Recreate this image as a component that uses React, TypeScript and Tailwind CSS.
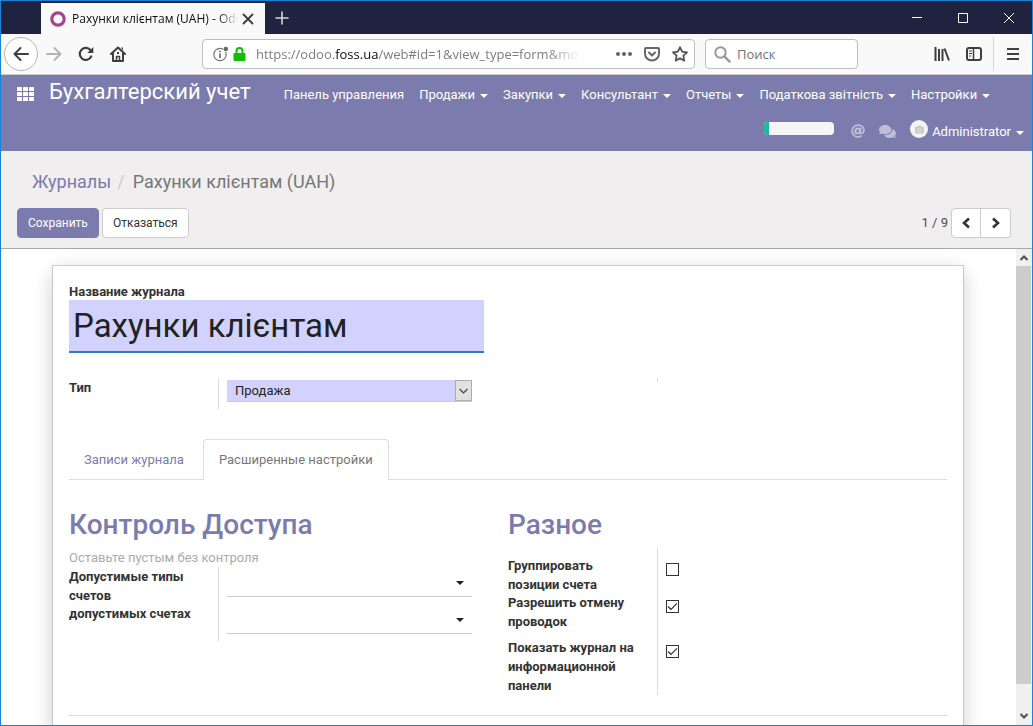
import React, { useState } from 'react';
import { FaAt, FaCamera, FaComments } from 'react-icons/fa';

const menuItems = [
  { label: 'Панель управления', dropdown: false },
  { label: 'Продажи', dropdown: true },
  { label: 'Закупки', dropdown: true },
  { label: 'Консультант', dropdown: true },
  { label: 'Отчеты', dropdown: true },
  { label: 'Податкова звітність', dropdown: true },
  { label: 'Настройки', dropdown: true },
];

function Caret() {
  return (
    <svg width="8" height="4" viewBox="0 0 8 4" fill="currentColor" aria-hidden="true">
      <path d="M0 0h8L4 4z" />
    </svg>
  );
}

function TitleBar() {
  return (
    <div className="flex h-[33px] shrink-0 items-stretch bg-[#202340]">
      <div className="ml-10 mt-0.5 flex w-56 items-center bg-[#f9f9fa] pl-2 pr-[11px]">
        <svg className="shrink-0" width="18" height="18" viewBox="0 0 18 18" aria-hidden="true">
          <circle cx="9" cy="9" r="6.2" fill="none" stroke="#a24689" strokeWidth="3.2" />
        </svg>
        <span className="ml-[5px] min-w-0 flex-1 overflow-hidden whitespace-nowrap font-['Open_Sans',sans-serif] text-xs text-[#0c0c0d] [mask-image:linear-gradient(to_right,black_88%,transparent)]">
          Рахунки клієнтам (UAH) - Odoo
        </span>
        <button type="button" aria-label="Закрыть вкладку" className="ml-1 text-[#3b3b3d]">
          <svg width="12" height="12" viewBox="0 0 12 12" stroke="currentColor" strokeWidth="1.8" strokeLinecap="round">
            <path d="M1.5 1.5l9 9M10.5 1.5l-9 9" />
          </svg>
        </button>
      </div>
      <button type="button" aria-label="Новая вкладка" className="ml-2.5 text-[#d5d5dc]">
        <svg width="14" height="14" viewBox="0 0 14 14" stroke="currentColor" strokeWidth="1.6" strokeLinecap="round">
          <path d="M7 1v12M1 7h12" />
        </svg>
      </button>
      <div className="ml-auto flex items-center gap-9 pr-[18px] text-white">
        <button type="button" aria-label="Свернуть">
          <svg width="10" height="10" viewBox="0 0 10 10" stroke="currentColor">
            <path d="M0 4.5h10" />
          </svg>
        </button>
        <button type="button" aria-label="Развернуть">
          <svg width="10" height="10" viewBox="0 0 10 10" fill="none" stroke="currentColor">
            <path d="M.5.5h9v9h-9z" />
          </svg>
        </button>
        <button type="button" aria-label="Закрыть">
          <svg width="10" height="10" viewBox="0 0 10 10" stroke="currentColor">
            <path d="M0 0l10 10M10 0L0 10" />
          </svg>
        </button>
      </div>
    </div>
  );
}

function BrowserToolbar() {
  return (
    <div className="flex h-[41px] shrink-0 items-center border-b border-[#cccccc] bg-[#f9f9fa] font-['Open_Sans',sans-serif] text-[#3f3f41]">
      <button
        type="button"
        aria-label="Назад"
        className="ml-[3px] flex size-[34px] items-center justify-center rounded-full border border-[#b5b5b7] bg-white"
      >
        <svg width="16" height="16" viewBox="0 0 16 16" fill="none" stroke="currentColor" strokeWidth="2" strokeLinecap="round" strokeLinejoin="round">
          <path d="M15 8H1.5M7.5 2l-6 6 6 6" />
        </svg>
      </button>
      <button type="button" aria-label="Вперед" className="ml-2 text-[#b4b4b5]">
        <svg width="16" height="16" viewBox="0 0 16 16" fill="none" stroke="currentColor" strokeWidth="2" strokeLinecap="round" strokeLinejoin="round">
          <path d="M1 8h13.500M8.500 2l6 6-6 6" />
        </svg>
      </button>
      <button type="button" aria-label="Обновить" className="ml-4">
        <svg width="16" height="16" viewBox="0 0 16 16" fill="none" stroke="currentColor" strokeWidth="2.200" strokeLinecap="round">
          <path d="M13.200 10.500a6 6 0 1 1-.5-6" />
          <path d="M15.300 1v6h-6z" fill="currentColor" stroke="none" />
        </svg>
      </button>
      <button type="button" aria-label="Домой" className="ml-4">
        <svg width="16" height="16" viewBox="0 0 16 16" fill="none" stroke="currentColor" strokeWidth="2" strokeLinejoin="round" strokeLinecap="round">
          <path d="M1 8l7-6.500L15 8M3 7.500V15h10V7.500" />
          <path d="M6.500 15v-4.500h3V15z" strokeWidth="1.500" />
          <path d="M7 6h2v2H7zM11 1.500h2v3" fill="currentColor" stroke="none" />
        </svg>
      </button>
      <div className="ml-[76px] flex h-[30px] min-w-0 flex-1 items-center rounded-sm border border-[#bdbdbd] bg-white pl-2.5 pr-[6px]">
        <svg className="shrink-0" width="16" height="16" viewBox="0 0 16 16" aria-hidden="true">
          <circle cx="7" cy="8.500" r="6.200" fill="none" stroke="#737373" strokeWidth="1.200" />
          <path d="M7 7.500v4.500M7 4.800v1.400" stroke="#737373" strokeWidth="1.800" />
          <circle cx="12.800" cy="3" r="3" fill="#fff" />
          <circle cx="12.800" cy="3" r="2.300" fill="#666" />
        </svg>
        <svg className="ml-1 shrink-0" width="13" height="14" viewBox="0 0 13 14" aria-hidden="true">
          <path d="M3.500 7V4a3 3 0 0 1 6 0v3" fill="none" stroke="#12bc00" strokeWidth="2" />
          <rect x="0.500" y="6" width="12" height="8" rx="1" fill="#12bc00" />
        </svg>
        <div
          role="textbox"
          tabIndex={0}
          aria-label="Адрес"
          className="ml-2.5 min-w-0 flex-1 overflow-hidden whitespace-nowrap text-[#7d7d7d] outline-none [mask-image:linear-gradient(to_right,black_90%,transparent)]"
        >
          https://odoo.<span className="text-[#0c0c0d]">foss.ua</span>/web#id=1&amp;view_type=form&amp;model
        </div>
        <button type="button" aria-label="Действия на странице" className="ml-9">
          <svg width="16" height="16" viewBox="0 0 16 16" fill="#666">
            <circle cx="2" cy="8" r="2" />
            <circle cx="8" cy="8" r="2" />
            <circle cx="14" cy="8" r="2" />
          </svg>
        </button>
        <button type="button" aria-label="Сохранить в Pocket" className="ml-3 text-[#666]">
          <svg width="16" height="16" viewBox="0 0 16 16" fill="none" stroke="currentColor" strokeWidth="2" strokeLinejoin="round" strokeLinecap="round">
            <path d="M2 2h12a1 1 0 0 1 1 1v4.500a7 7 0 0 1-14 0V3a1 1 0 0 1 1-1z" />
            <path d="M5 6.500l3 3 3-3" />
          </svg>
        </button>
        <button type="button" aria-label="В закладки" className="ml-3 text-[#555]">
          <svg width="16" height="16" viewBox="0 0 16 16" fill="none" stroke="currentColor" strokeWidth="1.800" strokeLinejoin="round">
            <path d="M8 1.200l2.100 4.500 4.900.600-3.600 3.400.900 4.900L8 12.200l-4.300 2.400.900-4.900L1 6.300l4.900-.600z" />
          </svg>
        </button>
      </div>
      <div className="ml-[10px] flex h-[30px] w-[153px] items-center rounded-sm border border-[#bdbdbd] bg-white pl-2">
        <svg className="shrink-0" width="17" height="17" viewBox="0 0 17 17" fill="none" stroke="#999" strokeLinecap="round" aria-hidden="true">
          <circle cx="6.500" cy="6.500" r="5.200" strokeWidth="2" />
          <path d="M10.800 10.800l4.800 4.800" strokeWidth="2.400" />
        </svg>
        <input
          aria-label="Поиск"
          placeholder="Поиск"
          className="ml-1.5 w-full min-w-0 bg-transparent outline-none placeholder:text-[#737373]"
        />
      </div>
      <button type="button" aria-label="Библиотека" className="ml-[76px]">
        <svg width="16" height="16" viewBox="0 0 16 16" stroke="currentColor" strokeWidth="2">
          <path d="M1.500 1v14M5 3v12M8.500 3v12M10.500 2.500l4.500 12" />
        </svg>
      </button>
      <button type="button" aria-label="Боковая панель" className="ml-4">
        <svg width="16" height="16" viewBox="0 0 16 16" fill="none" stroke="currentColor" strokeWidth="2">
          <rect x="1" y="2" width="14" height="12" rx="2" />
          <path d="M7.500 2v12" strokeWidth="1.500" />
          <path d="M3 5h3M3 7.500h3M3 10h2" strokeWidth="1" />
        </svg>
      </button>
      <div className="ml-[11px] h-[34px] w-px bg-[#d6d6d8]" />
      <button type="button" aria-label="Меню" className="ml-3 mr-3">
        <svg width="14" height="14" viewBox="0 0 14 14" stroke="currentColor" strokeWidth="2">
          <path d="M1 2h12M1 7h12M1 12h12" />
        </svg>
      </button>
    </div>
  );
}

function AppHeader() {
  return (
    <header className="h-[76px] shrink-0 bg-[#7c7bad] text-white">
      <div className="flex h-[38px] items-center pl-4">
        <button type="button" aria-label="Приложения">
          <svg width="17" height="14" viewBox="0 0 17 14" fill="currentColor">
            {[0, 5, 10].map((y) =>
              [0, 6, 12].map((x) => <rect key={`${x}-${y}`} x={x} y={y} width="5" height="4" rx="0.500" />)
            )}
          </svg>
        </button>
        <span className="mb-1.5 ml-[15px] whitespace-nowrap text-[22px]">Бухгалтерский учет</span>
        <nav className="ml-[33px] flex gap-[15px]">
          {menuItems.map((item) => (
            <a key={item.label} href="#" className="flex items-center gap-[5px] whitespace-nowrap">
              {item.label}
              {item.dropdown && <span className="pt-[3px]"><Caret /></span>}
            </a>
          ))}
        </nav>
      </div>
      <div className="flex h-9 items-center justify-end pr-2">
        <div className="mb-1.5 h-[13px] w-[70px] overflow-hidden rounded bg-[#f5f5f5]">
          <div className="h-full w-[5px] bg-[#21b799]" />
        </div>
        <button type="button" aria-label="Упоминания" className="ml-[17px] text-[#bebdd7]">
          <FaAt size={14} />
        </button>
        <button type="button" aria-label="Обсуждения" className="ml-[14px] text-[#bebdd7]">
          <FaComments size={17} />
        </button>
        <a href="#" className="ml-[14px] flex items-center">
          <span className="mb-1 flex size-[18px] items-center justify-center rounded-full bg-[#f3f3f3] text-[#c8c8c8]">
            <FaCamera size={9} />
          </span>
          <span className="ml-1 mr-[5px]">Administrator</span>
          <span className="pt-[3px]"><Caret /></span>
        </a>
      </div>
    </header>
  );
}

function Chevron({ d }: { d: string }) {
  return (
    <svg width="12" height="12" viewBox="0 0 12 12" fill="none" stroke="currentColor" strokeWidth="2.600" aria-hidden="true">
      <path d={d} />
    </svg>
  );
}

function ControlPanel() {
  return (
    <div className="h-[98px] shrink-0 border-b border-[#a8a8a8] bg-[#f0eeee] px-4 pt-[18px]">
      <nav aria-label="Путь" className="flex h-[26px] items-center pl-[15px] text-lg text-[#777]">
        <a href="#" className="text-[#7c7bad]">Журналы</a>
        <span className="ml-1.5 mr-2 text-[#ccc]">/</span>
        <span>Рахунки клієнтам (UAH)</span>
      </nav>
      <div className="mt-[13px] flex items-center justify-between">
        <div className="flex gap-[3px] text-xs">
          <button type="button" className="h-[30px] rounded-sm border border-[#7c7bad] bg-[#7c7bad] px-2.5 text-white">
            Сохранить
          </button>
          <button type="button" className="h-[30px] rounded-sm border border-[#ccc] bg-white px-2.5 text-[#333]">
            Отказаться
          </button>
        </div>
        <div className="mr-[5px] flex items-center">
          <span className="mb-0.5 mr-[3px] text-[#4c4c4c]">1 / 9</span>
          <button type="button" aria-label="Предыдущая запись" className="flex h-[30px] w-[30px] items-center justify-center rounded-l-sm border border-[#ccc] bg-white text-[#333]">
            <Chevron d="M9 1.500L4 6l5 4.500" />
          </button>
          <button type="button" aria-label="Следующая запись" className="flex h-[30px] w-[30px] items-center justify-center rounded-r-sm border border-l-0 border-[#ccc] bg-white text-[#333]">
            <Chevron d="M3 1.500L8 6l-5 4.500" />
          </button>
        </div>
      </div>
    </div>
  );
}

function ComboField({ id }: { id: string }) {
  return (
    <div className="flex h-[30px] items-center border-b border-[#ccc] pr-2 pt-0.5 text-[#222]">
      <input id={id} type="text" className="min-w-0 flex-1 bg-transparent outline-none" />
      <Caret />
    </div>
  );
}

function CheckField({ id, checked }: { id: string; checked: boolean }) {
  const [on, setOn] = useState(checked);
  return (
    <span className="grid size-[13px] place-items-center">
      <input
        id={id}
        type="checkbox"
        checked={on}
        onChange={() => setOn(!on)}
        className="col-start-1 row-start-1 size-[13px] appearance-none border border-[#333] bg-white"
      />
      {on && (
        <svg className="pointer-events-none col-start-1 row-start-1" width="13" height="13" viewBox="0 0 13 13" fill="none" stroke="#333" strokeWidth="1.200">
          <path d="M2 6.500L5 9.300l6-6" />
        </svg>
      )}
    </span>
  );
}

function JournalForm() {
  return (
    <form className="mx-auto mb-4 mt-4 border border-[#c8c8d3] bg-white px-4 pb-8 pt-[17px] shadow-[0_5px_20px_-3px_rgba(0,0,0,0.25)]">
      <label htmlFor="name" className="block leading-[17px] font-bold">
        Название журнала
      </label>
      <input
        id="name"
        type="text"
        defaultValue="Рахунки клієнтам"
        className="block h-[53px] w-[415px] max-w-full border-b-2 border-[#337ab7] bg-[#d2d2ff] px-1 text-[33px] text-[#222] outline-none"
      />

      <div className="mt-[25px] grid grid-cols-2">
        <div className="flex h-[31px]">
          <label htmlFor="type" className="w-[149px] shrink-0 leading-[19px] font-bold">Тип</label>
          <div className="flex-1 border-l border-[#ddd] pl-2 pr-9 pt-0.5">
            <div className="relative">
              <select
                id="type"
                className="block h-[22px] w-full appearance-none border-b border-[#ccc] bg-[#d2d2ff] px-2 text-[#222] outline-none"
              >
                <option>Продажа</option>
                <option>Закупка</option>
              </select>
              <span className="pointer-events-none absolute right-0 top-0 flex h-[21px] w-[17px] items-center justify-center border border-[#adadad] bg-[#e1e1e1]">
                <svg width="9" height="6" viewBox="0 0 9 6" fill="none" stroke="#444" strokeWidth="1.200">
                  <path d="M.5 1l4 4 4-4" />
                </svg>
              </span>
            </div>
          </div>
        </div>
        <div className="ml-[149px] h-1 border-l border-[#ddd]" />
      </div>

      <div role="tablist" className="mt-[30px] flex border-b border-[#ddd]">
        <button type="button" role="tab" aria-selected="false" className="px-[15px] text-[#7c7bad]">
          Записи журнала
        </button>
        <button
          type="button"
          role="tab"
          aria-selected="true"
          className="-mb-px ml-1 h-[41px] rounded-t border border-b-0 border-[#ddd] bg-white px-[15px] pb-0.5 text-[#777]"
        >
          Расширенные настройки
        </button>
      </div>

      <div className="grid grid-cols-2 pt-[30px]">
        <section>
          <h2 className="text-[28px] leading-[30px] font-medium text-[#7c7bad]">Контроль Доступа</h2>
          <p className="mt-2 leading-[19px] text-[#aaa]">Оставьте пустым без контроля</p>
          <div className="flex">
            <div className="w-[149px] shrink-0 leading-[19px] font-bold">
              <label htmlFor="account-types" className="block h-[37px]">Допустимые типы счетов</label>
              <label htmlFor="accounts" className="block h-[37px]">допустимых счетах</label>
            </div>
            <div className="flex flex-1 flex-col gap-[7px] border-l border-[#ddd] pl-2 pr-9">
              <ComboField id="account-types" />
              <ComboField id="accounts" />
            </div>
          </div>
        </section>
        <section>
          <h2 className="text-[28px] leading-[30px] font-medium text-[#7c7bad]">Разное</h2>
          <div className="mt-2 grid grid-cols-[149px_1fr] leading-[19px] font-bold">
            <label htmlFor="group-lines" className="h-[45px] pt-2 pr-4">Группировать позиции счета</label>
            <div className="border-l border-[#ddd] pl-2 pt-[15px]"><CheckField id="group-lines" checked={false} /></div>
            <label htmlFor="allow-cancel" className="h-[37px] pr-4">Разрешить отмену проводок</label>
            <div className="border-l border-[#ddd] pl-2 pt-[7px]"><CheckField id="allow-cancel" checked /></div>
            <label htmlFor="show-dashboard" className="h-[65px] pt-2 pr-4">Показать журнал на информационной панели</label>
            <div className="border-l border-[#ddd] pl-2 pt-[15px]"><CheckField id="show-dashboard" checked /></div>
          </div>
        </section>
      </div>
      <hr className="mt-5 border-[#ddd]" />
    </form>
  );
}

function Scrollbar() {
  return (
    <div aria-hidden="true" className="flex w-4 shrink-0 flex-col bg-[#f0f0f0] text-[#505050]">
      <span className="flex h-[17px] shrink-0 items-center justify-center">
        <svg width="8" height="6" viewBox="0 0 8 6" fill="none" stroke="currentColor" strokeWidth="2">
          <path d="M.5 5L4 1.500 7.500 5" />
        </svg>
      </span>
      <span className="mr-px flex-1 bg-[#cdcdcd]" />
      <span className="flex h-[41px] shrink-0 items-end justify-center pb-[6px]">
        <svg width="8" height="6" viewBox="0 0 8 6" fill="none" stroke="currentColor" strokeWidth="2">
          <path d="M.5 1L4 4.500 7.500 1" />
        </svg>
      </span>
    </div>
  );
}

export default function App() {
  return (
    <div className="flex h-screen flex-col overflow-hidden border border-[#1883d7] bg-white font-[Roboto,sans-serif] text-[13px] leading-[19px] text-[#333]">
      <TitleBar />
      <BrowserToolbar />
      <AppHeader />
      <ControlPanel />
      <main className="flex min-h-0 flex-1">
        <div className="min-w-0 flex-1 overflow-hidden pl-[51px] pr-[52px]">
          <JournalForm />
        </div>
        <Scrollbar />
      </main>
    </div>
  );
}
